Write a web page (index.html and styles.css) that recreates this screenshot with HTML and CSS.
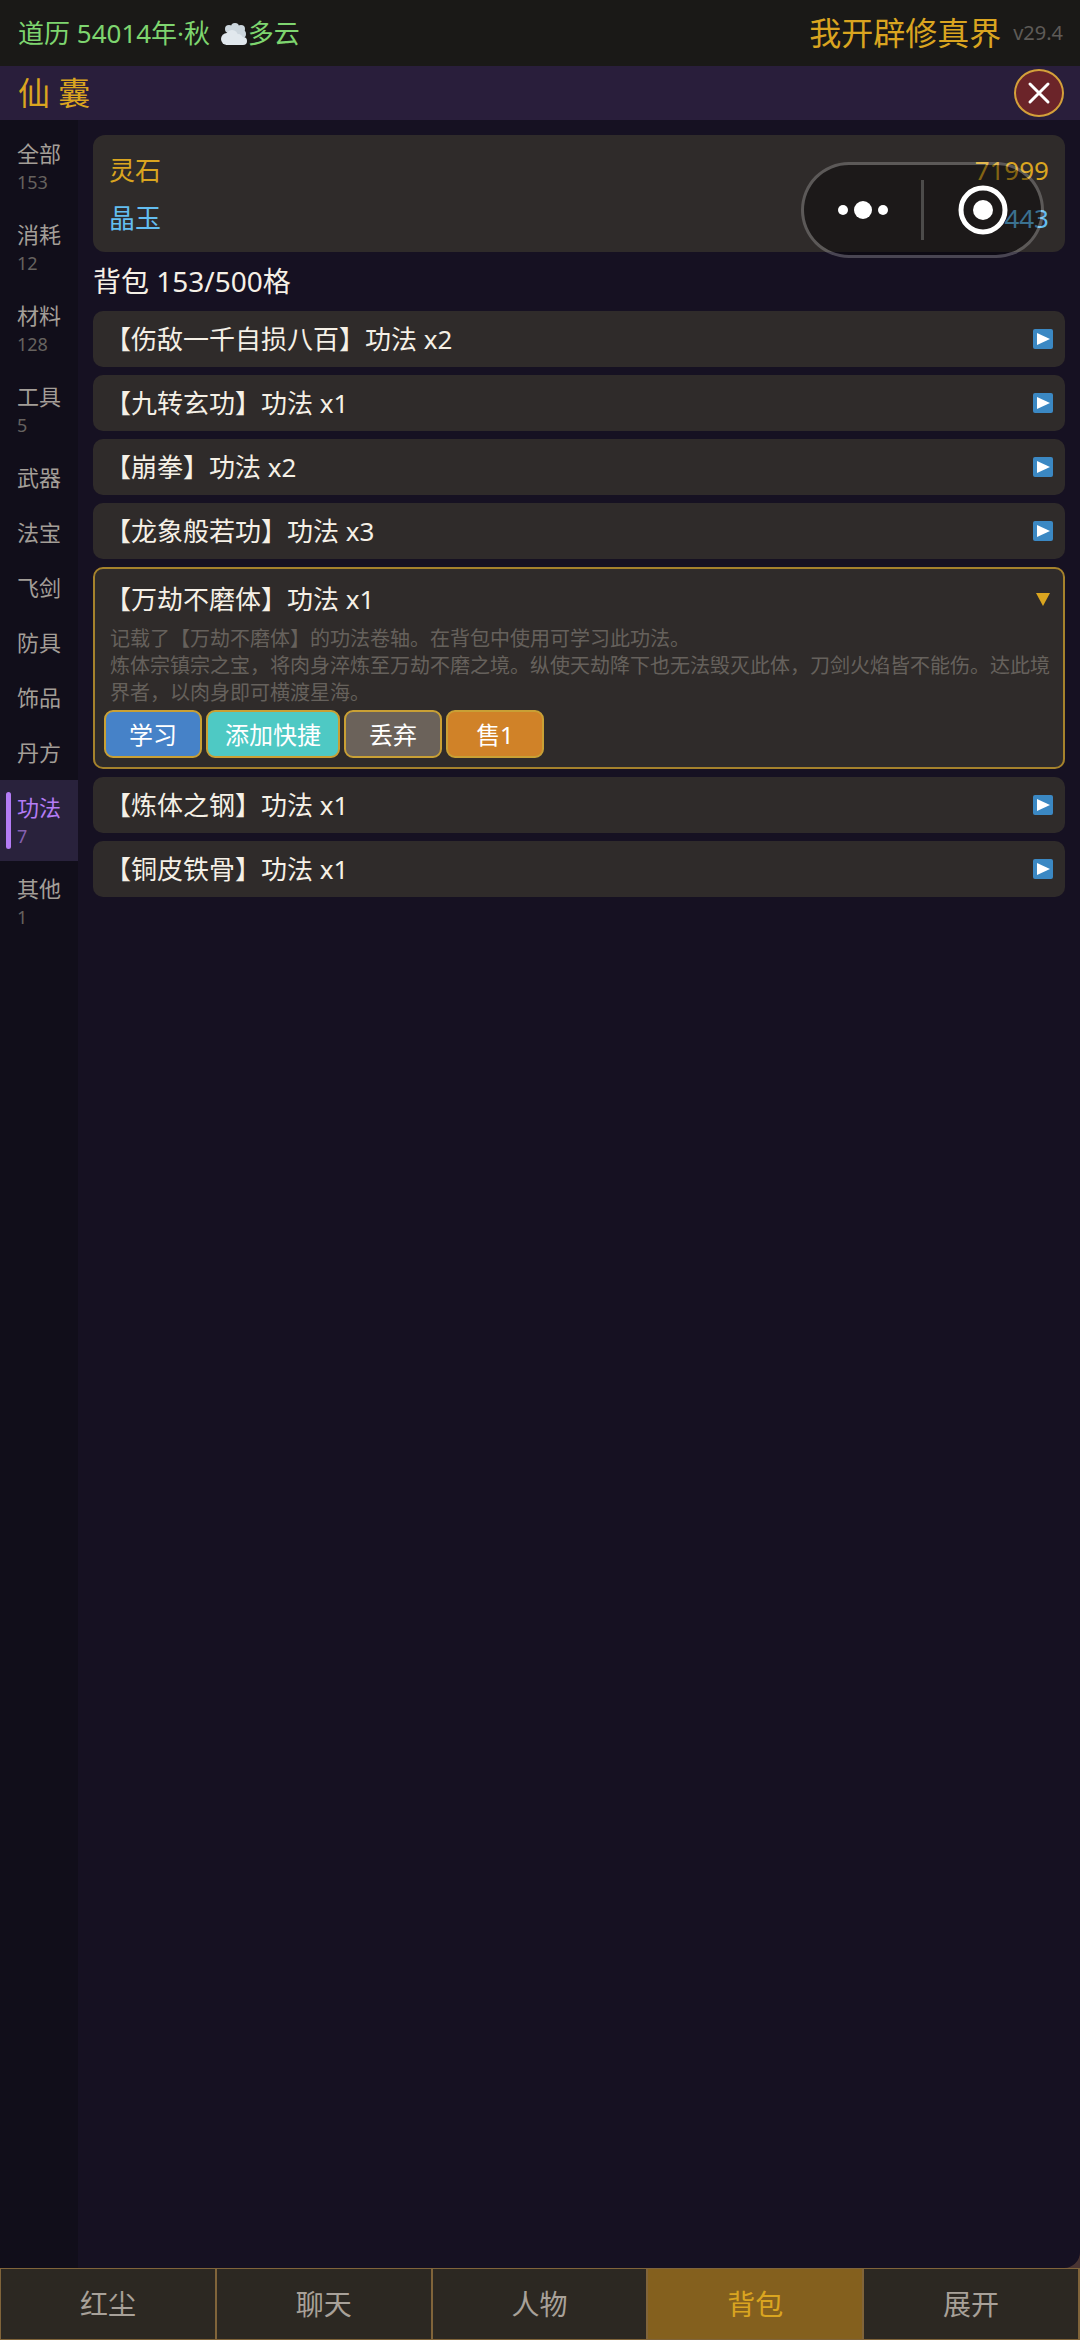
FILE: index.html
```html
<!DOCTYPE html>
<html lang="zh-CN">
<head>
    <meta charset="UTF-8">
    <meta name="viewport" content="width=device-width, initial-scale=1">
    <title>我开辟修真界</title>
    <link rel="stylesheet" href="styles.css">
</head>
<body>
<svg class="defs" aria-hidden="true">
    <symbol id="play" viewBox="0 0 20 20">
        <rect width="20" height="20" rx="2" fill="#3b88c3"/>
        <path d="M4 4l13 6-13 6z" fill="#fff"/>
    </symbol>
</svg>
<header class="topbar">
    <div class="date">道历 54014年·秋
        <svg class="cloud" viewBox="0 0 26 22" aria-hidden="true">
            <g fill="#ccd6dd">
                <circle cx="8" cy="6" r="4"/>
                <circle cx="14" cy="4" r="4"/>
                <circle cx="20" cy="6" r="4"/>
                <circle cx="21" cy="11" r="4"/>
                <circle cx="14" cy="9" r="7"/>
            </g>
            <g fill="#e1e8ed">
                <circle cx="11" cy="13" r="6"/>
                <circle cx="6" cy="16" r="6"/>
                <circle cx="17" cy="16" r="5"/>
                <circle cx="22" cy="18" r="4"/>
                <rect x="5" y="15" width="17" height="7"/>
            </g>
        </svg>多云
    </div>
    <div class="brand">我开辟修真界<span class="version">v29.4</span></div>
</header>
<div class="titlebar">
    <h1>仙 囊</h1>
    <button class="close" type="button" aria-label="关闭">
        <svg viewBox="0 0 20 20"><path d="M1 1l18 18M19 1L1 19"/></svg>
    </button>
</div>
<div class="page">
    <nav class="side">
        <a href="#"><span>全部<small>153</small></span></a>
        <a href="#"><span>消耗<small>12</small></span></a>
        <a href="#"><span>材料<small>128</small></span></a>
        <a href="#"><span>工具<small>5</small></span></a>
        <a href="#"><span>武器</span></a>
        <a href="#"><span>法宝</span></a>
        <a href="#"><span>飞剑</span></a>
        <a href="#"><span>防具</span></a>
        <a href="#"><span>饰品</span></a>
        <a href="#"><span>丹方</span></a>
        <a href="#" class="on"><span>功法<small>7</small></span></a>
        <a href="#"><span>其他<small>1</small></span></a>
    </nav>
    <main class="bag">
        <div class="money">
            <p class="stone"><span>灵石</span><span>71999</span></p>
            <p class="jade"><span>晶玉</span><span>443</span></p>
        </div>
        <h2>背包 153/500格</h2>
        <div class="list">
            <button class="item" type="button">【伤敌一千自损八百】功法 x2<svg><use href="#play"/></svg></button>
            <button class="item" type="button">【九转玄功】功法 x1<svg><use href="#play"/></svg></button>
            <button class="item" type="button">【崩拳】功法 x2<svg><use href="#play"/></svg></button>
            <button class="item" type="button">【龙象般若功】功法 x3<svg><use href="#play"/></svg></button>
            <div class="open">
                <button class="head" type="button" aria-expanded="true">【万劫不磨体】功法 x1<svg viewBox="0 0 20 20"><path d="M3 4h14l-7 13z" fill="#daa520"/></svg></button>
                <p class="desc">记载了【万劫不磨体】的功法卷轴。在背包中使用可学习此功法。<br>炼体宗镇宗之宝，将肉身淬炼至万劫不磨之境。纵使天劫降下也无法毁灭此体，刀剑火焰皆不能伤。达此境界者，以肉身即可横渡星海。</p>
                <div class="btns">
                    <button class="btn learn" type="button">学习</button>
                    <button class="btn quick" type="button">添加快捷</button>
                    <button class="btn drop" type="button">丢弃</button>
                    <button class="btn sell" type="button">售1</button>
                </div>
            </div>
            <button class="item" type="button">【炼体之钢】功法 x1<svg><use href="#play"/></svg></button>
            <button class="item" type="button">【铜皮铁骨】功法 x1<svg><use href="#play"/></svg></button>
        </div>
    </main>
</div>
<nav class="tabs">
    <a href="#">红尘</a>
    <a href="#">聊天</a>
    <a href="#">人物</a>
    <a href="#" class="on">背包</a>
    <a href="#">展开</a>
</nav>
<!-- 悬浮胶囊按钮 -->
<div class="capsule">
    <button type="button" aria-label="更多">
        <svg width="52" height="20" viewBox="0 0 52 20" fill="#fff"><circle cx="6" cy="10" r="5"/><circle cx="26" cy="10" r="9"/><circle cx="46" cy="10" r="5"/></svg>
    </button>
    <i></i>
    <button type="button" aria-label="退出">
        <svg width="50" height="50" viewBox="0 0 50 50"><circle cx="25" cy="25" r="22" fill="none" stroke="#fff" stroke-width="5"/><circle cx="25" cy="25" r="10" fill="#fff"/></svg>
    </button>
</div>
</body>
</html>
```
FILE: styles.css
```css
*{
    margin: 0;
    padding: 0;
    box-sizing: border-box;
}
body{
    display: flex;
    flex-direction: column;
    min-height: 100vh;
    background: #161122;
    color: #f5f0e6;
    font: 26px/1.5 "Noto Sans", "Noto Sans CJK SC", sans-serif;
}
a{
    color: inherit;
    text-decoration: none;
}
button{
    border: 0;
    background: none;
    color: inherit;
    font: inherit;
    cursor: pointer;
}
h1,h2{
    font-weight: 400;
}
.defs{
    position: absolute;
    width: 0;
    height: 0;
}
.topbar{
    display: flex;
    justify-content: space-between;
    align-items: center;
    height: 66px;
    padding: 0 17px 0 18px;
    background: #1a1917;
}
.date{
    color: #7ed56f;
}
.cloud{
    width: 26px;
    height: 22px;
    margin: 0 1px 0 4px;
    vertical-align: -2px;
}
.brand{
    display: flex;
    align-items: center;
    gap: 12px;
    color: #daa520;
    font-size: 32px;
}
.version{
    color: #5e5b57;
    font-size: 20px;
}
.titlebar{
    display: flex;
    justify-content: space-between;
    align-items: center;
    height: 54px;
    padding: 0 16px 0 18px;
    background: #291e3b;
}
.titlebar h1{
    color: #daa520;
    font-size: 32px;
}
.close{
    display: flex;
    align-items: center;
    justify-content: center;
    width: 50px;
    height: 48px;
    border: 2px solid #d4a03a;
    border-radius: 50%;
    background: #6b2429;
}
.close svg{
    width: 20px;
    height: 20px;
    overflow: visible;
    fill: none;
    stroke: #fff;
    stroke-width: 3;
    stroke-linecap: round;
}
.page{
    flex: 1;
    display: flex;
    background: #4a3533;
}

/* 左侧分类 */
.side{
    width: 78px;
    padding-top: 6px;
    background: #110e1a;
    color: #a39e98;
    font-size: 22px;
    line-height: 27px;
}
.side a{
    display: flex;
    gap: 6px;
    padding: 12px 0 12px 6px;
}
.side a:before{
    content: "";
    width: 5px;
    border-radius: 3px;
}
.side span{
    padding: 2px 0;
}
.side small{
    display: block;
    margin-top: 4px;
    color: #66625f;
    font-size: 18px;
    line-height: 22px;
}
.side .on{
    background: #29223c;
    color: #b47cf5;
}
.side .on:before{
    background: #b47cf5;
}
.side .on small{
    color: #8560b0;
}

/* 背包内容 */
.bag{
    flex: 1;
    padding: 15px 15px 0;
    border-bottom-right-radius: 16px;
    background: #161122;
}
.money{
    padding: 11px 16px 10px;
    border-radius: 12px;
    background: #2f2b2a;
    line-height: 48px;
}
.money p{
    display: flex;
    justify-content: space-between;
}
.stone{
    color: #daa520;
}
.jade{
    color: #63bdf0;
}
.bag h2{
    font-size: 28px;
    line-height: 59px;
}
.list{
    display: flex;
    flex-direction: column;
    gap: 8px;
}
.item,.head{
    display: flex;
    justify-content: space-between;
    align-items: center;
    width: 100%;
    text-align: left;
}
.item{
    height: 56px;
    padding: 0 12px;
    border-radius: 10px;
    background: #2f2b2a;
}
.item svg,.head svg{
    width: 20px;
    height: 20px;
}
.open{
    padding: 4px 9px 9px;
    border: 2px solid #a5822c;
    border-radius: 10px;
    background: #2f2b2a;
}
.head{
    height: 52px;
    padding: 0 1px;
}
.desc{
    padding: 0 4px 0 6px;
    color: #66615c;
    font-size: 20px;
    line-height: 27px;
}
.btns{
    display: flex;
    gap: 4px;
    margin-top: 4px;
}
.btn{
    min-width: 98px;
    height: 48px;
    padding: 0 17px;
    border: 2px solid #c9a035;
    border-radius: 9px;
    color: #fff;
    font-size: 24px;
    line-height: 43px;
}
.learn{
    background: #4682c8;
}
.quick{
    background: #4ec9c4;
}
.drop{
    background: #6b625a;
}
.sell{
    background: #d08228;
}

/* 底部导航 */
.tabs{
    display: grid;
    grid-template-columns: repeat(5, 1fr);
    border-left: 1px solid #80643a;
    background: #2c2822;
    color: #a8a199;
    font-size: 28px;
    line-height: 70px;
    text-align: center;
}
.tabs a{
    border: 1px solid #80643a;
    border-width: 1px 2px 1px 0;
}
.tabs .on{
    background: #84601e;
    color: #daa520;
}

.capsule{
    position: absolute;
    top: 162px;
    right: 36px;
    display: flex;
    align-items: center;
    width: 243px;
    height: 96px;
    border: 3px solid rgba(255,255,255,.22);
    border-radius: 48px;
    background: rgba(0,0,0,.4);
    background-clip: padding-box;
}
.capsule button{
    flex: 1;
    height: 100%;
    line-height: 0;
}
.capsule i{
    width: 3px;
    height: 60px;
    background: #4c4b4a;
}
```
